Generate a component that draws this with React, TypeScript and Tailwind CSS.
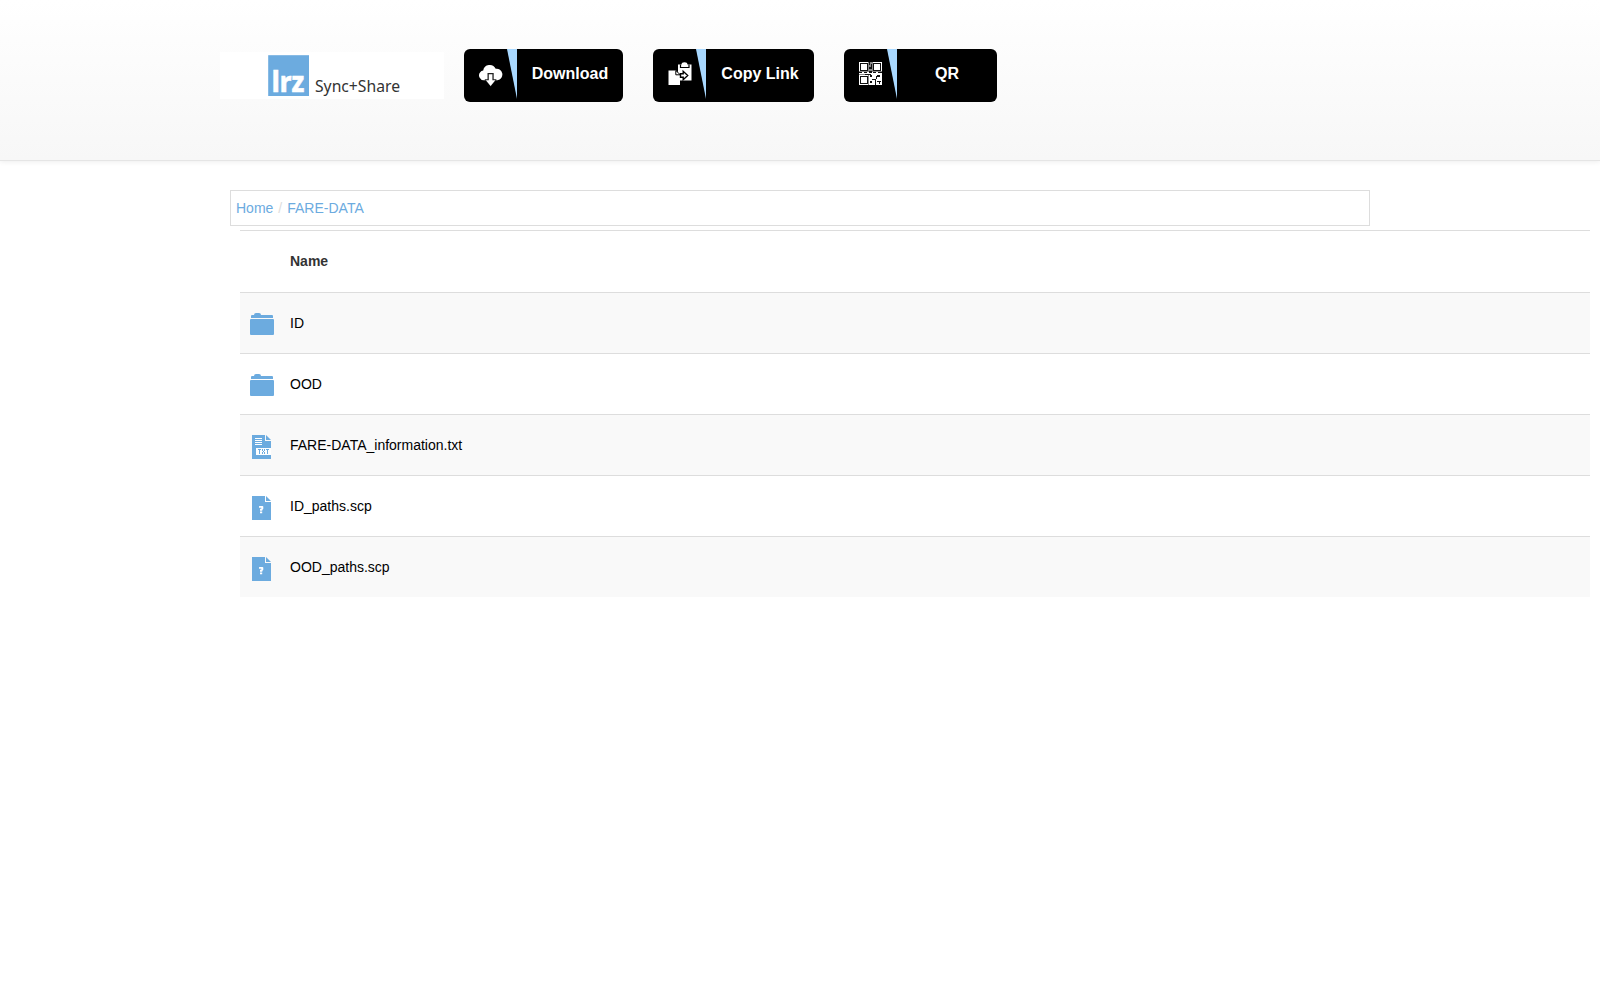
import type { ReactNode } from "react";

function Logo() {
  return (
    <svg className="block h-[47px] w-[224px] shrink-0 bg-white" viewBox="0 0 224 47" aria-label="LRZ Sync+Share">
      <rect x="48.2" y="3.2" width="40.8" height="40.8" fill="#6cabdf" />
      <text x="51.8" y="40.2" fontFamily="'Noto Sans', sans-serif" fontWeight="800" fontSize="27.500" textLength="32.500" lengthAdjust="spacingAndGlyphs" fill="#fff" stroke="#fff" strokeWidth=".5">lrz</text>
      <text x="95" y="39.5" fontFamily="'Noto Sans', sans-serif" fontSize="16.800" textLength="85" lengthAdjust="spacingAndGlyphs" fill="#333">Sync+Share</text>
    </svg>
  );
}

function CloudIcon() {
  return (
    <svg className="block h-[25px] w-6" viewBox="0 0 24 25">
      <path d="M5 18.200A4.800 4.800 0 0 1 1.200 10.300Q2.300 8.700 4.200 8.500A6.600 6.600 0 0 1 16.700 6.800A5.700 5.700 0 0 1 18.500 18.200Z" fill="#fff" />
      <path d="M8.500 11h6.200v6.200h3L11.600 24.800 5.500 17.200h3z" fill="#222" />
      <path d="M9.800 12.300h3.600v6h2.900L11.600 24l-4.700-5.700h2.900z" fill="#fff" />
    </svg>
  );
}

function CopyIcon() {
  return (
    <svg className="block size-6" viewBox="0 0 24 24">
      <path d="M10 2.500h3.500c.2-1.600 1-2.300 3-2.300s2.700.7 3 2.300h4V18.500H10z" fill="#fff" />
      <path d="M12.500 2.500v3h8.500v-3" fill="none" stroke="#000" strokeWidth="1.200" />
      <path d="M.5 8.500h7.500l4 4.200V23H.5z" fill="#fff" />
      <path d="M7.800 8.500v4.300h4.500z" fill="#fff" stroke="#000" strokeWidth="1" />
      <path d="M12.500 11.800h2.700V9.300l4.500 4.200-4.500 4.200v-2.500h-2.700z" fill="#fff" stroke="#000" strokeWidth="1.400" />
    </svg>
  );
}

function QrIcon() {
  return (
    <svg className="block size-6" viewBox="0 0 24 24" shapeRendering="crispEdges">
      <path d="M0 0h23v23H0z" fill="#fff" />
      <path d="M9 0h5v9H9zM0 9h23v1H0zM9 13h1v10H9zM0 12h9v1H0z" fill="#888" />
      <path d="M1 1h8v8H1zM14 1h8v8h-8zM1 14h8v8H1zM10 0h1v3h-1zM12 2h1v3h-1zM10 5h3v2h-3zM10 9h3v2h-3zM0 10h3v1H0zM5 10h3v1H5zM14 10h3v1h-3zM19 10h4v1h-4zM6 12h6v1H6zM11 13h2v2h-2zM18 13h3v2h-3zM17 14h1v3h-1zM13 17h4v1h-4zM11 19h2v2h-2zM16 18h1v5h-1zM18 19h4v1h-4zM20 20h1v2h-1z" fill="#111" />
      <path d="M2 2h6v6H2zM15 2h6v6h-6zM2 15h6v6H2z" fill="#fff" />
    </svg>
  );
}

function ActionButton({ icon, label, width }: { icon: ReactNode; label: string; width: string }) {
  return (
    <button className={`flex h-[53px] shrink-0 overflow-hidden rounded-md bg-black text-white ${width}`}>
      <span className="flex w-[43px] shrink-0 justify-end pt-[13px] pr-1">{icon}</span>
      <svg className="block h-[50px] w-[10px] shrink-0" viewBox="0 0 10 50">
        <path d="M0 0h10v50z" fill="#a8d8ff" />
      </svg>
      <span className="flex-1 pt-[13px] text-center text-base leading-6 font-bold whitespace-nowrap">{label}</span>
    </button>
  );
}

function FolderIcon() {
  return (
    <svg className="block h-[22px] w-6" viewBox="0 0 24 22" fill="#6cabdf">
      <path d="M1 5V3Q1 2 2 2h2q0-2 2-2h3q2 0 2 2h11q1 0 1 1v2z" />
      <rect y="6" width="24" height="16" rx="1" />
    </svg>
  );
}

function FileIcon({ kind }: { kind: "txt" | "unknown" }) {
  return (
    <svg className="block h-6 w-[19px]" viewBox="0 0 19 24">
      <path d="M0 0h13v6h6v18H0z" fill="#6cabdf" />
      <path d="M14 0l5 5h-5z" fill="#6cabdf" />
      {kind === "txt" ? (
        <>
          <path d="M3 3h7v1H3zM3 5h7v1H3zM3 7h7v1H3zM3 9h7v1H3zM4 13h15v7H4z" fill="#fff" />
          <path d="M6 14h3v1H8v4H7v-4H6zM10 14h1v2h1v-2h1v2h-1v1h1v2h-1v-2h-1v2h-1v-2h1v-1h-1zM14 14h3v1h-1v4h-1v-4h-1z" fill="#6cabdf" />
        </>
      ) : (
        <path d="M7 10.500q0-.5.500-.5h3q.8 0 .8.800v1.700q0 1-1 1.200v1.100H8v-2h1.300v-1.100H7zM8 15.600h2.200v1.700H8z" fill="#fff" />
      )}
    </svg>
  );
}

const files = [
  { name: "ID", kind: "folder" },
  { name: "OOD", kind: "folder" },
  { name: "FARE-DATA_information.txt", kind: "txt" },
  { name: "ID_paths.scp", kind: "unknown" },
  { name: "OOD_paths.scp", kind: "unknown" },
] as const;

export default function App() {
  return (
    <div className="min-h-screen bg-white font-['Liberation_Sans',Arial,sans-serif] text-sm text-[#333]">
      <header className="h-[161px] border-b border-[#e5e5e5] bg-linear-to-b from-white to-[#f7f7f7] pl-[220px] shadow-[0_1px_5px_rgba(0,0,0,0.07)]">
        <div className="flex pt-[49px]">
          <div className="mr-5 pt-[3px]"><Logo /></div>
          <div className="flex gap-[30px] [text-shadow:1px_1px_1px_rgba(255,255,255,0.5)]">
            <ActionButton icon={<CloudIcon />} label="Download" width="w-[159px]" />
            <ActionButton icon={<CopyIcon />} label="Copy Link" width="w-[161px]" />
            <ActionButton icon={<QrIcon />} label="QR" width="w-[153px]" />
          </div>
        </div>
      </header>
      <nav className="mt-[29px] ml-[230px] flex h-9 w-[1140px] items-center border border-[#ddd] px-[5px] text-[#6cabdf]">
        <a>Home</a>
        <span className="px-[5px] text-[#ddd]">/</span>
        <a>FARE-DATA</a>
      </nav>
      <main className="mt-1 mr-[10px] ml-[240px]">
        <div className="h-[62px] border-t border-[#ddd] pt-5 pl-[50px] leading-5 font-bold">Name</div>
        {files.map((file) => (
          <div key={file.name} className="flex h-[61px] border-t border-[#ddd] text-black odd:bg-white even:bg-[#f9f9f9]">
            <div className={file.kind === "folder" ? "w-[50px] pt-5 pl-[10px]" : "w-[50px] pt-5 pl-3"}>
              {file.kind === "folder" ? <FolderIcon /> : <FileIcon kind={file.kind} />}
            </div>
            <span className="pt-5 leading-5">{file.name}</span>
          </div>
        ))}
      </main>
    </div>
  );
}
